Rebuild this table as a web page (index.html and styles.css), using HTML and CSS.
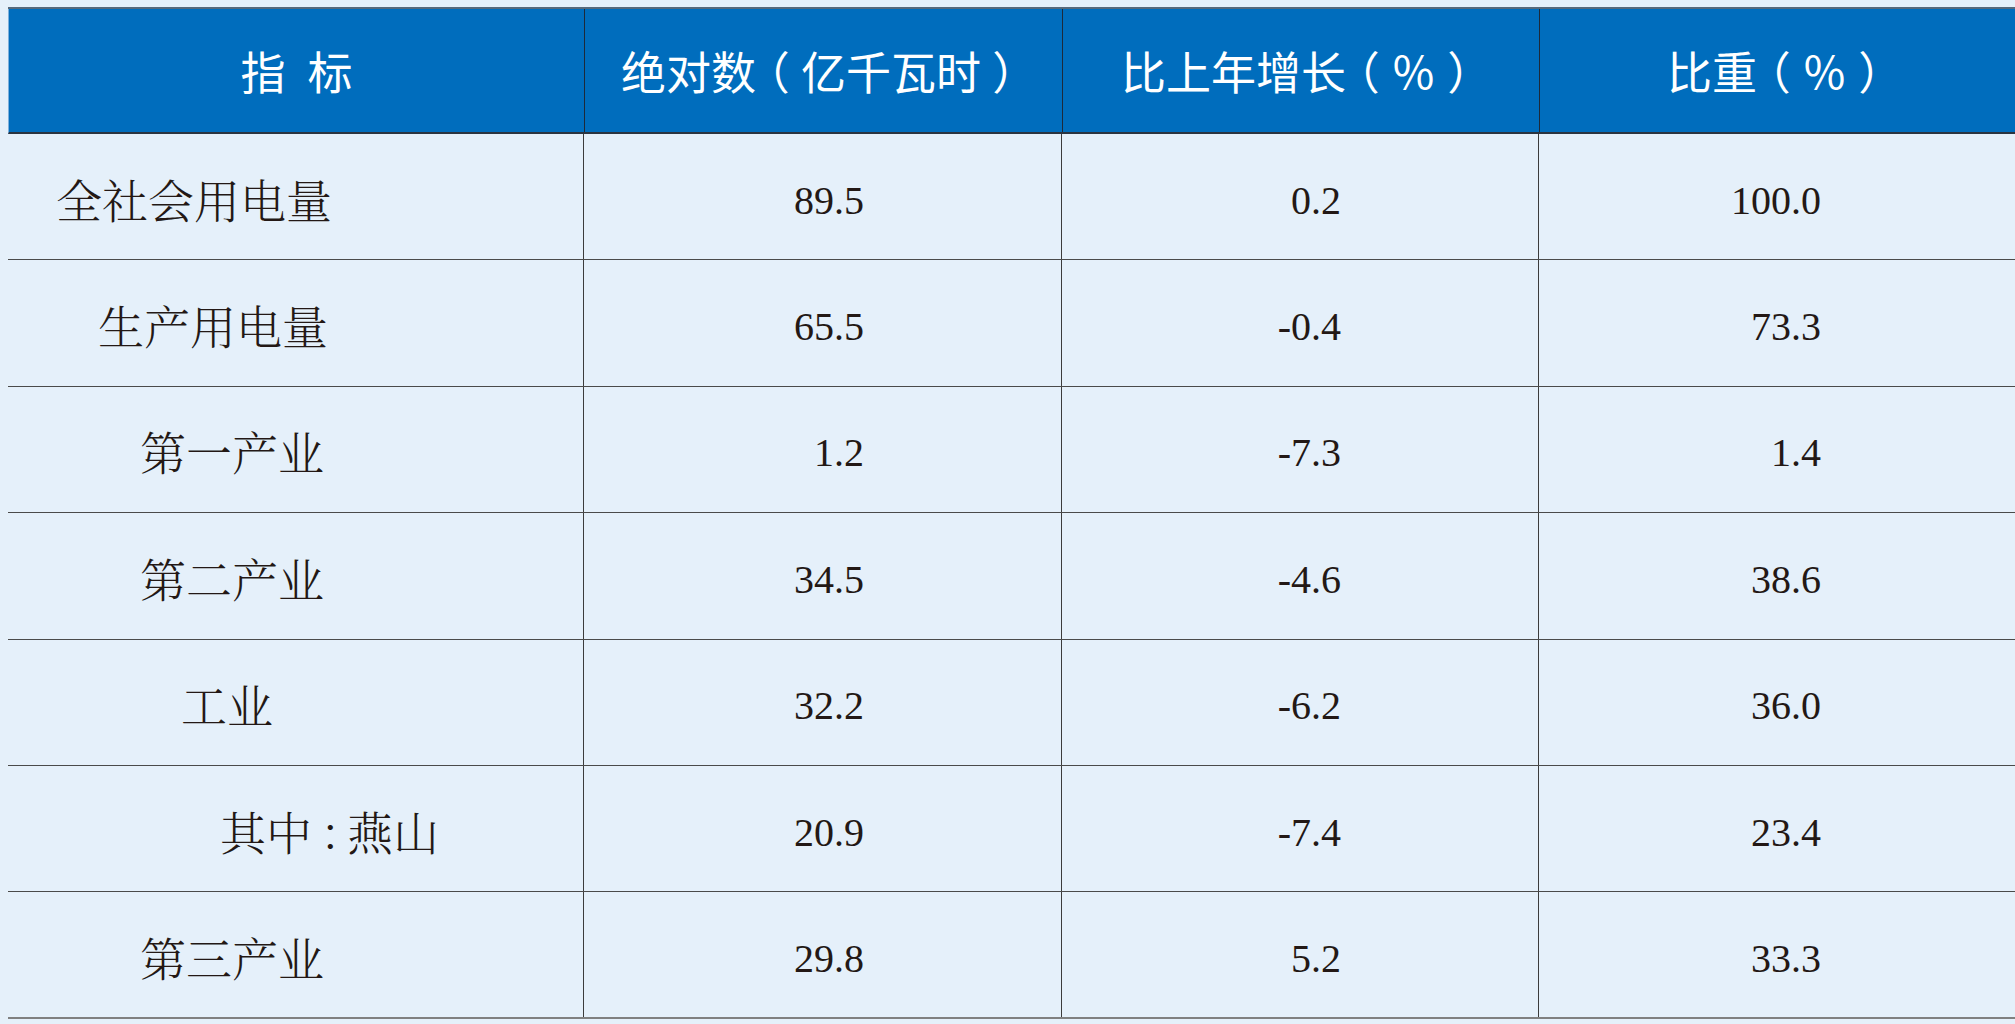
FILE: index.html
```html
<!DOCTYPE html>
<html lang="zh-CN">
<head>
<meta charset="utf-8">
<title>全社会用电量</title>
<link rel="stylesheet" href="styles.css">
</head>
<body>
<div class="table">
  <div class="row head">
    <div class="cell hc"><span class="spaced">指 标</span></div>
    <div class="cell hc">绝对数<span class="p">（</span>亿千瓦时<span class="p">）</span></div>
    <div class="cell hc">比上年增长<span class="p">（</span>％<span class="p">）</span></div>
    <div class="cell hc">比重<span class="p">（</span>％<span class="p">）</span></div>
  </div>
  <div class="row">
    <div class="cell label l0">全社会用电量</div>
    <div class="cell num">89.5</div>
    <div class="cell num">0.2</div>
    <div class="cell num">100.0</div>
  </div>
  <div class="row">
    <div class="cell label l1">生产用电量</div>
    <div class="cell num">65.5</div>
    <div class="cell num">-0.4</div>
    <div class="cell num">73.3</div>
  </div>
  <div class="row">
    <div class="cell label l2">第一产业</div>
    <div class="cell num">1.2</div>
    <div class="cell num">-7.3</div>
    <div class="cell num">1.4</div>
  </div>
  <div class="row">
    <div class="cell label l2">第二产业</div>
    <div class="cell num">34.5</div>
    <div class="cell num">-4.6</div>
    <div class="cell num">38.6</div>
  </div>
  <div class="row">
    <div class="cell label l3">工业</div>
    <div class="cell num">32.2</div>
    <div class="cell num">-6.2</div>
    <div class="cell num">36.0</div>
  </div>
  <div class="row">
    <div class="cell label l4">其中<span class="colon">：</span>燕山</div>
    <div class="cell num">20.9</div>
    <div class="cell num">-7.4</div>
    <div class="cell num">23.4</div>
  </div>
  <div class="row last">
    <div class="cell label l2">第三产业</div>
    <div class="cell num">29.8</div>
    <div class="cell num">5.2</div>
    <div class="cell num">33.3</div>
  </div>
</div>
</body>
</html>
```
FILE: styles.css
```css
html, body {
  margin: 0;
  padding: 0;
  background: #e5f0fa;
}

body {
  width: 2015px;
  height: 1024px;
  overflow: hidden;
}

.table {
  margin: 7px 0 0 8px;
  width: 2010px;
  border-top: 2px solid #56697c;
}

.row {
  display: grid;
  grid-template-columns: 575px 478px 477px 480px;
  height: 126.4px;
  box-sizing: border-box;
  border-bottom: 1.5px solid #4a4a4a;
}

.row.head {
  height: 125px;
  background: #006dbd;
  border-bottom: 2px solid #2b3440;
  border-left: 1px solid #7fb0dc;
}

.row.last {
  border-bottom: 2.5px solid #808080;
}

.cell {
  display: flex;
  align-items: center;
  border-left: 1px solid #3c3c3c;
  min-width: 0;
  color: #231815;
}

.cell:first-child {
  border-left: none;
}

.head .cell {
  border-left-color: #1d2a3a;
}

.head .cell:first-child {
  border-left: none;
}

.hc {
  justify-content: center;
  color: #ffffff;
  font-family: "Noto Sans CJK SC", "Noto Sans", sans-serif;
  font-size: 45px;
  font-weight: 400;
}

.hc .p {
  display: inline-block;
  width: 1em;
  text-align: center;
  font-feature-settings: "halt" 1;
}

.spaced {
  word-spacing: 12px;
}

.label {
  font-family: "Noto Serif CJK SC", "Noto Sans CJK SC Light", "Noto Sans CJK SC", serif;
  font-size: 46px;
  font-weight: 300;
  padding-left: 48px;
  padding-top: 2px;
}

.label.l1 { padding-left: 90px; }
.label.l2 { padding-left: 132px; }
.label.l3 { padding-left: 173px; }
.label.l4 { padding-left: 212px; }

.colon {
  font-feature-settings: "halt" 1;
  margin: 0 4px 0 8px;
}

.num {
  justify-content: flex-end;
  padding-right: 197px;
  font-family: "Liberation Serif", "Times New Roman", serif;
  font-size: 40px;
  padding-top: 7px;
}
```
